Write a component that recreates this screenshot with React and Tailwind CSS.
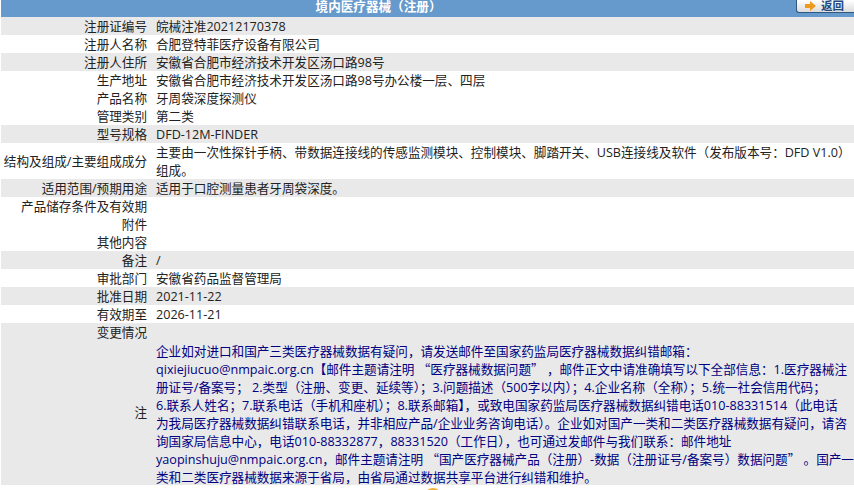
const font = { fontFamily: '"Open Sans", "Noto Sans CJK SC", sans-serif' };

const rows = [
  { label: "注册证编号", value: "皖械注准20212170378", grey: true },
  { label: "注册人名称", value: "合肥登特菲医疗设备有限公司" },
  { label: "注册人住所", value: "安徽省合肥市经济技术开发区汤口路98号", grey: true },
  { label: "生产地址", value: "安徽省合肥市经济技术开发区汤口路98号办公楼一层、四层" },
  { label: "产品名称", value: "牙周袋深度探测仪" },
  { label: "管理类别", value: "第二类" },
  { label: "型号规格", value: "DFD-12M-FINDER", grey: true },
  { label: "结构及组成/主要组成成分", value: "主要由一次性探针手柄、带数据连接线的传感监测模块、控制模块、脚踏开关、USB连接线及软件（发布版本号：DFD V1.0）组成。", tall: true },
  { label: "适用范围/预期用途", value: "适用于口腔测量患者牙周袋深度。", grey: true },
  { label: "产品储存条件及有效期", value: "" },
  { label: "附件", value: "" },
  { label: "其他内容", value: "" },
  { label: "备注", value: "/", grey: true },
  { label: "审批部门", value: "安徽省药品监督管理局" },
  { label: "批准日期", value: "2021-11-22", grey: true },
  { label: "有效期至", value: "2026-11-21" },
  { label: "变更情况", value: "", grey: true },
];

const noteLines = [
  "企业如对进口和国产三类医疗器械数据有疑问，请发送邮件至国家药监局医疗器械数据纠错邮箱：",
  "qixiejiucuo@nmpaic.org.cn【邮件主题请注明 “医疗器械数据问题” ，邮件正文中请准确填写以下全部信息：1.医疗器械注",
  "册证号/备案号； 2.类型（注册、变更、延续等）；3.问题描述（500字以内）；4.企业名称（全称）；5.统一社会信用代码；",
  "6.联系人姓名；7.联系电话（手机和座机）；8.联系邮箱】，或致电国家药监局医疗器械数据纠错电话010-88331514（此电话",
  "为我局医疗器械数据纠错联系电话，并非相应产品/企业业务咨询电话）。企业如对国产一类和二类医疗器械数据有疑问，请咨",
  "询国家局信息中心，电话010-88332877，88331520（工作日），也可通过发邮件与我们联系：邮件地址",
  "yaopinshuju@nmpaic.org.cn，邮件主题请注明 “国产医疗器械产品（注册）-数据（注册证号/备案号）数据问题” 。国产一",
  "类和二类医疗器械数据来源于省局，由省局通过数据共享平台进行纠错和维护。",
];

// curly quotes are full width in the reference, so they take the CJK font
const renderLine = (line) =>
  line.split(/([“”])/).map((part, i) =>
    part === "“" || part === "”" ? (
      <span key={i} className="font-['Noto_Sans_CJK_SC'] leading-none">{part}</span>
    ) : (
      part
    )
  );

export default function App() {
  return (
    <div className="relative h-[490px] w-[854px] overflow-hidden bg-white pl-px text-[12.6px] leading-[18px] text-[#222]" style={font}>
      {/* Header */}
      <div className="relative flex h-[17px] justify-center overflow-hidden bg-[#6699cc] font-bold text-white">
        <span className="mr-[98px] -mt-[2px]">境内医疗器械（注册）</span>
        <button className="absolute right-0 top-0 flex h-[13px] w-[58px] items-center gap-[5px] rounded-bl-[3px] border border-t-0 border-r-0 border-[#31587f] bg-gradient-to-b from-white to-[#dcdcdc] pl-[8px] text-[11.5px] font-bold leading-none text-[#1f4a80]">
          <svg width="11" height="10" viewBox="0 0 11 10">
            <path d="M0 3h5V0l6 5-6 5V7H0z" fill="#ef9a1d" />
          </svg>
          返回
        </button>
      </div>

      {/* Rows */}
      {rows.map((row) => (
        <div
          key={row.label}
          className={`flex ${row.tall ? "h-[36px]" : "h-[18px]"} ${row.grey ? "bg-[#e9e9e9]" : "bg-white"}`}
        >
          <div className="flex w-[146px] shrink-0 items-center justify-end whitespace-nowrap pt-px">{row.label}</div>
          <div className="flex-1 pl-[9px] pt-px">{row.value}</div>
        </div>
      ))}

      {/* Note */}
      <div className="flex h-[144px] overflow-hidden bg-[#e9e9e9]">
        <div className="flex w-[146px] shrink-0 items-center justify-end">注</div>
        <div className="flex-1 pl-[9px] pt-[2px] text-[#000080]">
          {noteLines.map((line) => (
            <div key={line} className="h-[18px] whitespace-nowrap">{renderLine(line)}</div>
          ))}
        </div>
      </div>

      {/* Icon peeking in at the bottom edge */}
      <div className="absolute left-[424px] top-[488px] h-[18px] w-[18px] rounded-full bg-[#f2b233]" />
    </div>
  );
}
